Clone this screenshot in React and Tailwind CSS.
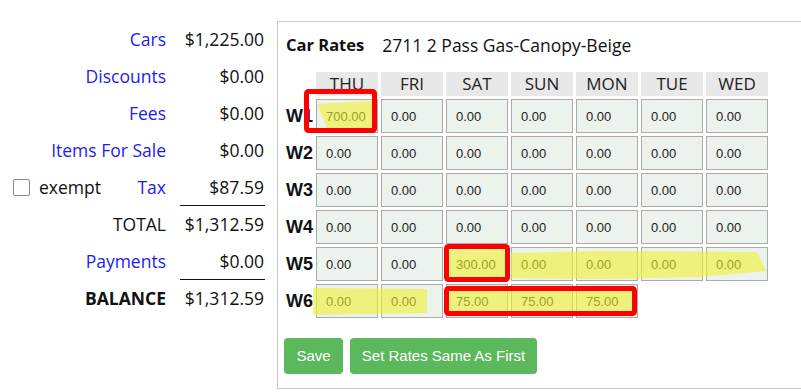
import React from "react";

const days = ["THU", "FRI", "SAT", "SUN", "MON", "TUE", "WED"];

const weeks = [
  { label: "W1", rates: ["700.00", "0.00", "0.00", "0.00", "0.00", "0.00", "0.00"] },
  { label: "W2", rates: ["0.00", "0.00", "0.00", "0.00", "0.00", "0.00", "0.00"] },
  { label: "W3", rates: ["0.00", "0.00", "0.00", "0.00", "0.00", "0.00", "0.00"] },
  { label: "W4", rates: ["0.00", "0.00", "0.00", "0.00", "0.00", "0.00", "0.00"] },
  { label: "W5", rates: ["0.00", "0.00", "300.00", "0.00", "0.00", "0.00", "0.00"] },
  { label: "W6", rates: ["0.00", "0.00", "75.00", "75.00", "75.00"] },
];

const summary = [
  { label: "Cars", value: "$1,225.00", link: true },
  { label: "Discounts", value: "$0.00", link: true },
  { label: "Fees", value: "$0.00", link: true },
  { label: "Items For Sale", value: "$0.00", link: true },
  { label: "Tax", value: "$87.59", link: true, exempt: true, line: true },
  { label: "TOTAL", value: "$1,312.59" },
  { label: "Payments", value: "$0.00", link: true, line: true },
  { label: "BALANCE", value: "$1,312.59", bold: true },
];

function Summary() {
  return (
    <div className="w-[277px] shrink-0 pt-[21px] font-['Open_Sans',sans-serif] text-[17.5px] text-[#111]">
      <div className="grid grid-cols-[166px_85px] gap-x-[14px]">
        {summary.map((row) => (
          <React.Fragment key={row.label}>
            <div className="h-[37px] flex items-center justify-end pl-[13px]">
              {row.exempt && (
                <label className="flex items-center mr-auto">
                  <span className="w-[17px] h-[17px] border border-[#8a8a8a] rounded-[2px] bg-white" />
                  <span className="ml-[9px]">exempt</span>
                </label>
              )}
              <span className={row.link ? "text-[#1c1cf0]" : row.bold ? "font-bold" : ""}>{row.label}</span>
            </div>
            <div className={`h-[37px] flex items-center justify-end pr-[1px] ${row.line ? "border-b border-[#111]" : ""}`}>
              {row.value}
            </div>
          </React.Fragment>
        ))}
      </div>
    </div>
  );
}

function RatesPanel() {
  return (
    <div className="w-[560px] shrink-0 h-[368px] border border-[#c8c8c8] pl-[8px] pt-[12px]">
      <div className="flex items-center h-[22px] font-['Open_Sans',sans-serif] text-[17.5px] text-[#111]">
        <span className="font-bold text-[16.5px]">Car Rates</span>
        <span className="ml-[18px]">2711 2 Pass Gas-Canopy-Beige</span>
      </div>

      <div className="mt-[16px] grid grid-cols-[27px_repeat(7,62px)] gap-[3px]">
        <div />
        {days.map((d) => (
          <div key={d} className="h-[24px] bg-[#e8e8e8] flex items-center justify-center font-['Open_Sans',sans-serif] text-[17px] text-[#222]">
            {d}
          </div>
        ))}
        {weeks.map((w) => (
          <React.Fragment key={w.label}>
            <div className="h-[34px] flex items-center font-['Liberation_Sans',sans-serif] font-bold text-[18px] text-[#111]">
              {w.label}
            </div>
            {w.rates.map((r, i) => (
              <input
                key={i}
                readOnly
                value={r}
                className="w-[62px] h-[34px] border border-[#ababab] bg-[#ecf2ec] px-[9px] font-['Liberation_Sans',sans-serif] text-[13px] text-[#222] outline-none"
              />
            ))}
            {w.rates.length < 7 && <div className="col-span-2" />}
          </React.Fragment>
        ))}
      </div>

      <div className="mt-[20px] -ml-[2px] flex gap-[7px] font-['Liberation_Sans',sans-serif] text-[15px] text-white">
        <button className="h-[36px] w-[59px] rounded-[4px] bg-[#5cb85c]">Save</button>
        <button className="h-[36px] w-[187px] rounded-[4px] bg-[#5cb85c]">Set Rates Same As First</button>
      </div>
    </div>
  );
}

function Markup() {
  return (
    <svg className="absolute inset-0 pointer-events-none" width="801" height="392" viewBox="0 0 801 392">
      <g fill="#f0f030" fillOpacity="0.6">
        <polygon points="317,104 372,101 372,128 328,130" />
        <polygon points="447,250 505,249 505,279 447,278" />
        <polygon points="511,253 600,251 757,252 766,271 700,277 600,279 511,278" />
        <polygon points="313,288 427,289 427,313 313,315" />
        <polygon points="447,290 632,290 632,313 447,313" />
      </g>
      <g fill="none" stroke="#ff0000" strokeWidth="5">
        <rect x="306.5" y="91.5" width="68" height="39" rx="2" />
        <rect x="446.5" y="246.5" width="61" height="33" rx="2" />
        <rect x="446.5" y="288.5" width="188" height="25" rx="2" />
      </g>
    </svg>
  );
}

export default function App() {
  return (
    <div className="relative w-[801px] h-[392px] overflow-hidden bg-white flex">
      <Summary />
      <div className="pt-[21px]">
        <RatesPanel />
      </div>
      <Markup />
    </div>
  );
}
